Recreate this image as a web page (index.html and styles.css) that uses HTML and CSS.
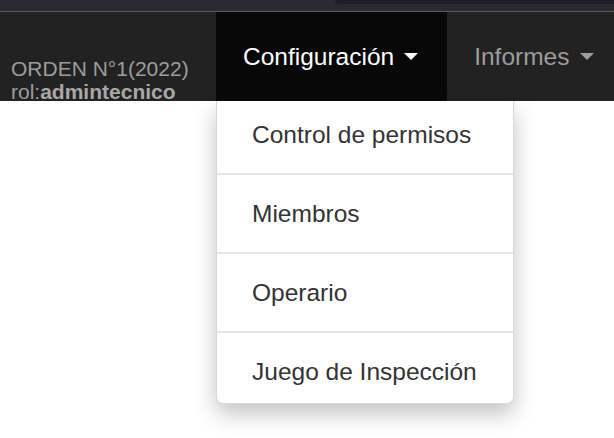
FILE: index.html
```html
<!DOCTYPE html>
<html>
  <head>
    <meta charset="utf-8" />
    <title>Configuración</title>
    <link rel="stylesheet" href="styles.css">
  </head>
  <body>
    <div class="chrome">
      <div class="chrome-tab"></div>
    </div>
    <div class="navbar">
      <div class="brand">
        <span>ORDEN N°1(2022)</span>
        <span>rol:<b>admintecnico</b></span>
      </div>
      <div class="nav-item active">
        <span>Configuración</span>
        <span class="caret"></span>
      </div>
      <div class="nav-item">
        <span>Informes</span>
        <span class="caret"></span>
      </div>
    </div>
    <div class="menu-row">
      <ul class="dropdown">
        <li>Control de permisos</li>
        <li class="divider"></li>
        <li>Miembros</li>
        <li class="divider"></li>
        <li>Operario</li>
        <li class="divider"></li>
        <li>Juego de Inspección</li>
      </ul>
    </div>
  </body>
</html>
```

FILE: styles.css
```css
body {
  margin: 0;
  background: #fff;
  font-family: "Liberation Sans", Arial, sans-serif;
}

.chrome {
  display: flex;
  justify-content: flex-end;
  height: 11px;
  background: #2b2a33;
  border-bottom: 1px solid #5b5a64;
}

.chrome-tab {
  width: 279px;
  height: 4px;
  background: #1f1e25;
  border-bottom-left-radius: 5px;
}

.navbar {
  display: flex;
  height: 89px;
  background: #222;
}

.brand {
  flex: 0 0 auto;
  width: 205px;
  padding: 45px 0 0 11px;
  display: flex;
  flex-direction: column;
  font-size: 21px;
  line-height: 23px;
  color: #9d9d9d;
  white-space: nowrap;
  overflow: hidden;
}

.brand b {
  color: #a8a8a8;
}

.nav-item {
  flex: 0 0 auto;
  display: flex;
  align-items: center;
  gap: 10px;
  padding: 0 27px 0 27px;
  font-size: 24.5px;
  line-height: 35px;
  color: #9d9d9d;
  white-space: nowrap;
}

.nav-item.active {
  background: #080808;
  color: #fff;
  padding-right: 29px;
}

.caret {
  width: 0;
  height: 0;
  border-top: 7px solid currentColor;
  border-left: 7px solid transparent;
  border-right: 7px solid transparent;
}

.menu-row {
  padding-left: 216px;
  padding-bottom: 30px;
}

.dropdown {
  width: 296px;
  margin: 0;
  padding: 0;
  list-style: none;
  background: #fff;
  border: 1px solid rgba(0, 0, 0, 0.15);
  border-top: 0;
  border-radius: 0 0 7px 7px;
  box-shadow: 0 10px 22px rgba(0, 0, 0, 0.24);
  color: #333;
  font-size: 24.5px;
  line-height: 35px;
}

.dropdown li {
  padding: 21px 35px 21px;
}

.dropdown li:first-child {
  padding-top: 16px;
}

.dropdown li:last-child {
  padding-bottom: 14px;
}

.dropdown .divider {
  padding: 0;
  height: 2px;
  background: #e6e6e6;
}
```
